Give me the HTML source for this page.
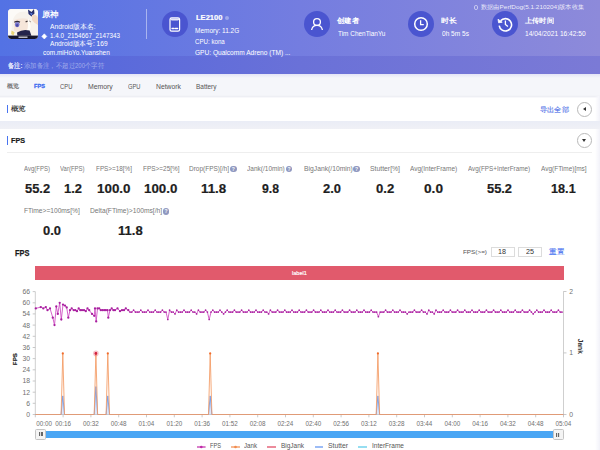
<!DOCTYPE html>
<html><head><meta charset="utf-8">
<style>
*{margin:0;padding:0;box-sizing:border-box}
html,body{width:600px;height:450px;overflow:hidden;background:#fff;font-family:"Liberation Sans",sans-serif}
.a{position:absolute;white-space:nowrap;line-height:1}
.hdr{position:absolute;left:0;top:0;width:600px;height:74px;background:linear-gradient(90deg,#5372e4 0%,#747de0 50%,#8d8ada 100%)}
.note{position:absolute;left:0;top:56px;width:600px;height:18px;background:linear-gradient(90deg,#5066dd 0%,#6a71d8 50%,#7b7ad6 100%)}
.circ{position:absolute;width:26px;height:26px;border-radius:50%;background:#4a55d0}
.q{position:absolute;width:6.5px;height:6.5px;border-radius:50%;background:#8f98c0;color:#fff;font-size:5px;font-weight:bold;line-height:6.5px;text-align:center}
</style></head><body>
<div class="hdr"></div>
<div class="note"></div>
<svg style="position:absolute;left:8px;top:9px" width="30" height="30" viewBox="0 0 30 30">
 <defs><clipPath id="rc"><rect width="30" height="30" rx="3.5"/></clipPath></defs>
 <g clip-path="url(#rc)">
  <rect width="30" height="30" fill="#f7f2ec"/>
  <path d="M6 11Q13 8 20 10L23 14 22 21 14 24 6 22Z" fill="#f6e6da"/>
  <path d="M0 0H30V6Q22 1 12 3 5 6 4 14L3 30H0Z" fill="#fcfaf7"/>
  <ellipse cx="9.2" cy="15.6" rx="2.3" ry="2.6" fill="#7c7ad2"/>
  <ellipse cx="9.2" cy="16.4" rx="1.2" ry="1.3" fill="#4c4aa0"/>
  <path d="M6.3 13.3Q9.2 11.6 12 13.2" stroke="#302a3a" stroke-width="1.1" fill="none"/>
  <path d="M17.6 13Q20 11.4 22.4 13" stroke="#4a3e3e" stroke-width="1.2" fill="none"/>
  <path d="M20 0.5L23.5 3 26 0 26.5 4.5 23.5 7.5 20.5 5Z" fill="#28306e"/>
  <path d="M21.8 3.8L24.6 4.6 23.6 6.6Z" fill="#5c7ae0"/>
  <path d="M24 6Q28.5 5 30 9V16Q26.5 14.5 24 11Z" fill="#f2d9c6"/>
  <path d="M20.5 10Q25.5 17 19.5 27L16.5 26.4Q21.5 18.5 19.5 11Z" fill="#fffdf9"/>
  <path d="M9 23.6Q15 19.6 21.6 21.6L23.4 26.7H9.4Z" fill="#24244a"/>
  <path d="M3.6 21.6L6.6 23.2 5.6 26.6 3.1 25.1Z" fill="#ead676"/>
  <rect y="26.6" width="30" height="3.4" fill="#16162a"/>
  <rect x="10.5" y="27.5" width="9" height="1.4" fill="#c8c8d0"/>
 </g>
</svg>
<svg style="position:absolute;left:41.2px;top:32.5px" width="7" height="7" viewBox="0 0 7 7"><path d="M3.3 0.8L5.8 3.4 3.3 6 0.8 3.4Z" fill="#fff" stroke="#fff" stroke-width="0.6" stroke-linejoin="round"/></svg>
<div style="position:absolute;left:146px;top:9px;width:1px;height:30px;background:rgba(255,255,255,0.45)"></div>

<div class="circ" style="left:162px;top:11px"></div>
<svg style="position:absolute;left:162px;top:11px" width="26" height="26" viewBox="0 0 26 26">
 <rect x="8" y="6.9" width="9.6" height="13.3" rx="1.6" fill="none" stroke="#fff" stroke-width="1.2"/>
 <path d="M8.6 7.6H17V9L15.6 9.6H10L8.6 9Z" fill="#fff" opacity="0.85"/>
 <line x1="10" y1="17.5" x2="12.2" y2="17.5" stroke="#fff" stroke-width="1.4" stroke-linecap="round"/>
 <line x1="13.4" y1="17.5" x2="15.6" y2="17.5" stroke="#fff" stroke-width="1.4" stroke-linecap="round"/>
</svg>
<div style="position:absolute;left:225px;top:15.7px;width:4px;height:3.9px;border-radius:2px;background:rgba(255,255,255,0.35)"></div>

<div class="circ" style="left:304px;top:11px"></div>
<svg style="position:absolute;left:304px;top:11px" width="26" height="26" viewBox="0 0 26 26">
 <circle cx="13" cy="11" r="3.4" fill="none" stroke="#fff" stroke-width="1.3"/>
 <path d="M7.6 19q0.8-4.6 5.4-4.6t5.4 4.6" fill="none" stroke="#fff" stroke-width="1.3"/>
</svg>

<div class="circ" style="left:408px;top:11px"></div>
<svg style="position:absolute;left:408px;top:11px" width="26" height="26" viewBox="0 0 26 26">
 <circle cx="13" cy="13" r="6.3" fill="none" stroke="#fff" stroke-width="1.5"/>
 <path d="M12.6 9.3V13.6H15.8" fill="none" stroke="#fff" stroke-width="1.3"/>
</svg>

<div class="circ" style="left:491.5px;top:11px"></div>
<svg style="position:absolute;left:491.5px;top:11px" width="26" height="26" viewBox="0 0 26 26">
 <path d="M8.6 9.8A6.2 6.2 0 1 1 7.2 14.6" fill="none" stroke="#fff" stroke-width="1.6"/>
 <path d="M6 8.2L6.6 11.8 10.2 11.2Z" fill="#fff" stroke="#fff" stroke-width="0.8" stroke-linejoin="round"/>
 <path d="M13.4 9.6V13.5L15.9 15.6" fill="none" stroke="#fff" stroke-width="1.3"/>
</svg>
<div style="position:absolute;left:474.2px;top:4.8px;width:3.6px;height:5.2px;border:0.6px solid rgba(255,255,255,0.55);border-radius:1.8px"></div>
<div class="a" style="left:42.30px;top:11.07px;font-size:7.6px;color:#fff;font-weight:bold;transform:scaleX(1.060);transform-origin:0 0;">原神</div>
<div class="a" style="left:50.00px;top:24.42px;font-size:6.8px;color:#fff;transform:scaleX(0.984);transform-origin:0 0;">Android版本名:</div>
<div class="a" style="left:50.00px;top:32.62px;font-size:6.8px;color:#fff;transform:scaleX(0.926);transform-origin:0 0;">1.4.0_2154667_2147343</div>
<div class="a" style="left:50.00px;top:41.22px;font-size:6.8px;color:#fff;transform:scaleX(0.967);transform-origin:0 0;">Android版本号: 169</div>
<div class="a" style="left:43.00px;top:50.32px;font-size:6.8px;color:#fff;transform:scaleX(0.948);transform-origin:0 0;">com.miHoYo.Yuanshen</div>
<div class="a" style="left:195.50px;top:13.66px;font-size:7.8px;color:#fff;font-weight:bold;transform:scaleX(0.970);transform-origin:0 0;-webkit-text-stroke:0.2px #fff;">LE2100</div>
<div class="a" style="left:195.20px;top:27.50px;font-size:6.9px;color:#fff;transform:scaleX(0.942);transform-origin:0 0;">Memory: 11.2G</div>
<div class="a" style="left:195.10px;top:38.90px;font-size:6.9px;color:#fff;transform:scaleX(0.893);transform-origin:0 0;">CPU: kona</div>
<div class="a" style="left:195.10px;top:50.10px;font-size:6.9px;color:#fff;transform:scaleX(0.955);transform-origin:0 0;">GPU: Qualcomm Adreno (TM) ...</div>
<div class="a" style="left:337.11px;top:16.78px;font-size:7.4px;color:#fff;font-weight:bold;transform:scaleX(1.048);transform-origin:0 0;">创建者</div>
<div class="a" style="left:337.50px;top:31.40px;font-size:6.9px;color:#fff;transform:scaleX(0.933);transform-origin:0 0;">Tim ChenTianYu</div>
<div class="a" style="left:441.28px;top:16.78px;font-size:7.4px;color:#fff;font-weight:bold;transform:scaleX(1.124);transform-origin:0 0;">时长</div>
<div class="a" style="left:441.70px;top:31.40px;font-size:6.9px;color:#fff;transform:scaleX(0.951);transform-origin:0 0;">0h 5m 5s</div>
<div class="a" style="left:524.92px;top:16.78px;font-size:7.4px;color:#fff;font-weight:bold;transform:scaleX(1.029);transform-origin:0 0;">上传时间</div>
<div class="a" style="left:525.30px;top:31.40px;font-size:6.9px;color:#fff;transform:scaleX(0.959);transform-origin:0 0;">14/04/2021 16:42:50</div>
<div class="a" style="left:480.68px;top:4.31px;font-size:6.2px;color:rgba(255,255,255,0.85);transform:scaleX(1.033);transform-origin:0 0;">数据由PerfDog(5.1.210204)版本收集</div>
<div class="a" style="left:7.70px;top:63.20px;font-size:6.6px;color:rgba(255,255,255,0.92);font-weight:bold;transform:scaleX(0.896);transform-origin:0 0;">备注:</div>
<div class="a" style="left:24.20px;top:63.40px;font-size:6.6px;color:rgba(255,255,255,0.45);transform:scaleX(0.910);transform-origin:0 0;">添加备注，不超过200个字符</div>

<div style="position:absolute;left:0;top:74px;width:600px;height:23.5px;background:linear-gradient(#f5f6fa 0,#f5f6fa 21px,#eeeff4 22.5px,#f8f8fb 23.5px)"></div>
<div style="position:absolute;left:0;top:74px;width:600px;height:4px;background:linear-gradient(#e4e4f6,#f5f6fa)"></div>
<div class="a" style="left:6.68px;top:83.21px;font-size:6.2px;color:#555;transform:scaleX(1.019);transform-origin:0 0;-webkit-text-stroke:0.1px #555;">概览</div>
<div class="a" style="left:34.00px;top:83.21px;font-size:6.2px;color:#3d6cf0;font-weight:bold;transform:scaleX(0.912);transform-origin:0 0;-webkit-text-stroke:0.3px #3d6cf0;">FPS</div>
<div class="a" style="left:60.00px;top:82.59px;font-size:7px;color:#555;transform:scaleX(0.839);transform-origin:0 0;">CPU</div>
<div class="a" style="left:87.60px;top:82.59px;font-size:7px;color:#555;transform:scaleX(0.981);transform-origin:0 0;">Memory</div>
<div class="a" style="left:127.50px;top:82.59px;font-size:7px;color:#555;transform:scaleX(0.824);transform-origin:0 0;">GPU</div>
<div class="a" style="left:155.50px;top:82.59px;font-size:7px;color:#555;transform:scaleX(0.969);transform-origin:0 0;">Network</div>
<div class="a" style="left:196.00px;top:82.59px;font-size:7px;color:#555;transform:scaleX(0.924);transform-origin:0 0;">Battery</div>

<div style="position:absolute;left:0;top:97.5px;width:600px;height:23.5px;background:#fff"></div>
<div style="position:absolute;left:6.7px;top:105px;width:1.6px;height:8px;background:#4874f0"></div>
<div style="position:absolute;left:577px;top:102px;width:15px;height:15px;border-radius:50%;border:0.8px solid #b8b8b8;background:#fff"></div>
<div style="position:absolute;left:582.5px;top:107.3px;width:0;height:0;border-top:2.3px solid transparent;border-bottom:2.3px solid transparent;border-right:3.2px solid #333"></div>
<div style="position:absolute;left:0;top:121px;width:600px;height:8px;background:linear-gradient(#eaedf6,#f0f1f6)"></div>
<div style="position:absolute;left:6.7px;top:136px;width:1.6px;height:9.2px;background:#4874f0"></div>
<div style="position:absolute;left:577.2px;top:133.2px;width:14.8px;height:14.8px;border-radius:50%;border:0.8px solid #b8b8b8;background:#fff"></div>
<div style="position:absolute;left:582.2px;top:139.3px;width:0;height:0;border-left:2.4px solid transparent;border-right:2.4px solid transparent;border-top:3.2px solid #333"></div>
<div style="position:absolute;left:7px;top:152px;width:585px;height:1px;background:#eeeeee"></div>
<div class="a" style="left:10.61px;top:105.38px;font-size:7.4px;color:#2a2a2a;transform:scaleX(1.067);transform-origin:0 0;-webkit-text-stroke:0.12px #2a2a2a;">概览</div>
<div class="a" style="left:540.34px;top:105.79px;font-size:7.0px;color:#4a6ee8;transform:scaleX(1.026);transform-origin:0 0;-webkit-text-stroke:0.1px #4a6ee8;">导出全部</div>
<div class="a" style="left:11.00px;top:136.53px;font-size:8.0px;color:#1a1a1a;font-weight:bold;transform:scaleX(0.900);transform-origin:0 0;-webkit-text-stroke:0.2px #1a1a1a;">FPS</div>

<div class="a" style="left:24.00px;top:164.89px;font-size:7.0px;color:#777;transform:scaleX(0.857);transform-origin:0 0;">Avg(FPS)</div>
<div class="a" style="left:24.70px;top:182.14px;font-size:13.6px;color:#1e1e1e;font-weight:bold;transform:scaleX(0.946);transform-origin:0 0;-webkit-text-stroke:0.2px #1e1e1e;">55.2</div>
<div class="a" style="left:60.00px;top:164.89px;font-size:7.0px;color:#777;transform:scaleX(0.857);transform-origin:0 0;">Var(FPS)</div>
<div class="a" style="left:64.00px;top:182.14px;font-size:13.6px;color:#1e1e1e;font-weight:bold;transform:scaleX(0.952);transform-origin:0 0;-webkit-text-stroke:0.2px #1e1e1e;">1.2</div>
<div class="a" style="left:96.00px;top:164.89px;font-size:7.0px;color:#777;transform:scaleX(0.907);transform-origin:0 0;">FPS&gt;=18[%]</div>
<div class="a" style="left:97.00px;top:182.14px;font-size:13.6px;color:#1e1e1e;font-weight:bold;transform:scaleX(0.984);transform-origin:0 0;-webkit-text-stroke:0.2px #1e1e1e;">100.0</div>
<div class="a" style="left:142.70px;top:164.89px;font-size:7.0px;color:#777;transform:scaleX(0.922);transform-origin:0 0;">FPS&gt;=25[%]</div>
<div class="a" style="left:144.00px;top:182.14px;font-size:13.6px;color:#1e1e1e;font-weight:bold;transform:scaleX(0.979);transform-origin:0 0;-webkit-text-stroke:0.2px #1e1e1e;">100.0</div>
<div class="a" style="left:189.30px;top:164.89px;font-size:7.0px;color:#777;transform:scaleX(0.926);transform-origin:0 0;">Drop(FPS)[/h]</div>
<div class="q" style="left:230.1px;top:165.8px">?</div>
<div class="a" style="left:200.70px;top:182.14px;font-size:13.6px;color:#1e1e1e;font-weight:bold;transform:scaleX(0.982);transform-origin:0 0;-webkit-text-stroke:0.2px #1e1e1e;">11.8</div>
<div class="a" style="left:247.30px;top:164.89px;font-size:7.0px;color:#777;transform:scaleX(0.932);transform-origin:0 0;">Jank(/10min)</div>
<div class="q" style="left:285.8px;top:165.8px">?</div>
<div class="a" style="left:262.30px;top:182.14px;font-size:13.6px;color:#1e1e1e;font-weight:bold;transform:scaleX(0.899);transform-origin:0 0;-webkit-text-stroke:0.2px #1e1e1e;">9.8</div>
<div class="a" style="left:303.75px;top:164.89px;font-size:7.0px;color:#777;transform:scaleX(0.964);transform-origin:0 0;">BigJank(/10min)</div>
<div class="q" style="left:353.3px;top:165.8px">?</div>
<div class="a" style="left:323.00px;top:182.14px;font-size:13.6px;color:#1e1e1e;font-weight:bold;transform:scaleX(0.952);transform-origin:0 0;-webkit-text-stroke:0.2px #1e1e1e;">2.0</div>
<div class="a" style="left:370.00px;top:164.89px;font-size:7.0px;color:#777;transform:scaleX(0.976);transform-origin:0 0;">Stutter[%]</div>
<div class="a" style="left:375.50px;top:182.14px;font-size:13.6px;color:#1e1e1e;font-weight:bold;transform:scaleX(0.965);transform-origin:0 0;-webkit-text-stroke:0.2px #1e1e1e;">0.2</div>
<div class="a" style="left:410.00px;top:164.89px;font-size:7.0px;color:#777;transform:scaleX(0.928);transform-origin:0 0;">Avg(InterFrame)</div>
<div class="a" style="left:424.30px;top:182.14px;font-size:13.6px;color:#1e1e1e;font-weight:bold;transform:scaleX(1.005);transform-origin:0 0;-webkit-text-stroke:0.2px #1e1e1e;">0.0</div>
<div class="a" style="left:467.70px;top:164.89px;font-size:7.0px;color:#777;transform:scaleX(0.907);transform-origin:0 0;">Avg(FPS+InterFrame)</div>
<div class="a" style="left:487.30px;top:182.14px;font-size:13.6px;color:#1e1e1e;font-weight:bold;transform:scaleX(0.945);transform-origin:0 0;-webkit-text-stroke:0.2px #1e1e1e;">55.2</div>
<div class="a" style="left:540.70px;top:164.89px;font-size:7.0px;color:#777;transform:scaleX(0.924);transform-origin:0 0;">Avg(FTime)[ms]</div>
<div class="a" style="left:551.00px;top:182.14px;font-size:13.6px;color:#1e1e1e;font-weight:bold;transform:scaleX(0.933);transform-origin:0 0;-webkit-text-stroke:0.2px #1e1e1e;">18.1</div>
<div class="a" style="left:24.00px;top:207.49px;font-size:7.0px;color:#777;transform:scaleX(0.947);transform-origin:0 0;">FTime&gt;=100ms[%]</div>
<div class="a" style="left:43.00px;top:224.14px;font-size:13.6px;color:#1e1e1e;font-weight:bold;transform:scaleX(0.952);transform-origin:0 0;-webkit-text-stroke:0.2px #1e1e1e;">0.0</div>
<div class="a" style="left:89.60px;top:207.49px;font-size:7.0px;color:#777;transform:scaleX(0.957);transform-origin:0 0;">Delta(FTime)&gt;100ms[/h]</div>
<div class="q" style="left:162.8px;top:208.4px">?</div>
<div class="a" style="left:117.60px;top:224.14px;font-size:13.6px;color:#1e1e1e;font-weight:bold;transform:scaleX(0.960);transform-origin:0 0;-webkit-text-stroke:0.2px #1e1e1e;">11.8</div>

<div style="position:absolute;left:490.5px;top:247px;width:24px;height:10px;border:1px solid #dcdcdc"></div>
<div style="position:absolute;left:518px;top:247px;width:24px;height:10px;border:1px solid #dcdcdc"></div>

<div style="position:absolute;left:35.3px;top:266px;width:528.4px;height:14px;background:#e15a6c"></div>
<svg width="600" height="450" style="position:absolute;left:0;top:0" font-family="Liberation Sans">
<line x1="35.3" y1="291.6" x2="35.3" y2="414.5" stroke="#cfcfcf" stroke-width="1"/>
<line x1="563.5" y1="291.4" x2="563.5" y2="414.5" stroke="#cfcfcf" stroke-width="1"/>
<line x1="32.699999999999996" y1="414.5" x2="35.3" y2="414.5" stroke="#bbb" stroke-width="0.8"/>
<text x="30" y="416.9" text-anchor="end" font-size="6.8" fill="#707070">0</text>
<line x1="32.699999999999996" y1="403.3" x2="35.3" y2="403.3" stroke="#bbb" stroke-width="0.8"/>
<text x="30" y="405.7" text-anchor="end" font-size="6.8" fill="#707070">6</text>
<line x1="32.699999999999996" y1="392.2" x2="35.3" y2="392.2" stroke="#bbb" stroke-width="0.8"/>
<text x="30" y="394.6" text-anchor="end" font-size="6.8" fill="#707070">12</text>
<line x1="32.699999999999996" y1="381.0" x2="35.3" y2="381.0" stroke="#bbb" stroke-width="0.8"/>
<text x="30" y="383.4" text-anchor="end" font-size="6.8" fill="#707070">18</text>
<line x1="32.699999999999996" y1="369.8" x2="35.3" y2="369.8" stroke="#bbb" stroke-width="0.8"/>
<text x="30" y="372.2" text-anchor="end" font-size="6.8" fill="#707070">24</text>
<line x1="32.699999999999996" y1="358.6" x2="35.3" y2="358.6" stroke="#bbb" stroke-width="0.8"/>
<text x="30" y="361.0" text-anchor="end" font-size="6.8" fill="#707070">30</text>
<line x1="32.699999999999996" y1="347.5" x2="35.3" y2="347.5" stroke="#bbb" stroke-width="0.8"/>
<text x="30" y="349.9" text-anchor="end" font-size="6.8" fill="#707070">36</text>
<line x1="32.699999999999996" y1="336.3" x2="35.3" y2="336.3" stroke="#bbb" stroke-width="0.8"/>
<text x="30" y="338.7" text-anchor="end" font-size="6.8" fill="#707070">42</text>
<line x1="32.699999999999996" y1="325.1" x2="35.3" y2="325.1" stroke="#bbb" stroke-width="0.8"/>
<text x="30" y="327.5" text-anchor="end" font-size="6.8" fill="#707070">48</text>
<line x1="32.699999999999996" y1="313.9" x2="35.3" y2="313.9" stroke="#bbb" stroke-width="0.8"/>
<text x="30" y="316.3" text-anchor="end" font-size="6.8" fill="#707070">54</text>
<line x1="32.699999999999996" y1="302.8" x2="35.3" y2="302.8" stroke="#bbb" stroke-width="0.8"/>
<text x="30" y="305.2" text-anchor="end" font-size="6.8" fill="#707070">60</text>
<line x1="32.699999999999996" y1="291.6" x2="35.3" y2="291.6" stroke="#bbb" stroke-width="0.8"/>
<text x="30" y="294.0" text-anchor="end" font-size="6.8" fill="#707070">66</text>
<line x1="563.5" y1="291.5" x2="566.5" y2="291.5" stroke="#bbb" stroke-width="0.8"/>
<text x="569.3" y="293.9" font-size="6.8" fill="#707070">2</text>
<line x1="563.5" y1="352.9" x2="566.5" y2="352.9" stroke="#bbb" stroke-width="0.8"/>
<text x="569.3" y="355.3" font-size="6.8" fill="#707070">1</text>
<line x1="563.5" y1="414.5" x2="566.5" y2="414.5" stroke="#bbb" stroke-width="0.8"/>
<text x="569.3" y="416.9" font-size="6.8" fill="#707070">0</text>
<line x1="35.3" y1="414.5" x2="563.5" y2="414.5" stroke="#cfcfcf" stroke-width="1"/>
<line x1="35.3" y1="414.5" x2="35.3" y2="417.3" stroke="#bbb" stroke-width="0.8"/>
<text x="36.2" y="425.8" font-size="6.3" fill="#707070">00:00</text>
<line x1="63.1" y1="414.5" x2="63.1" y2="417.3" stroke="#bbb" stroke-width="0.8"/>
<text x="63.1" y="425.8" text-anchor="middle" font-size="6.3" fill="#707070">00:16</text>
<line x1="90.9" y1="414.5" x2="90.9" y2="417.3" stroke="#bbb" stroke-width="0.8"/>
<text x="90.9" y="425.8" text-anchor="middle" font-size="6.3" fill="#707070">00:32</text>
<line x1="118.7" y1="414.5" x2="118.7" y2="417.3" stroke="#bbb" stroke-width="0.8"/>
<text x="118.7" y="425.8" text-anchor="middle" font-size="6.3" fill="#707070">00:48</text>
<line x1="146.5" y1="414.5" x2="146.5" y2="417.3" stroke="#bbb" stroke-width="0.8"/>
<text x="146.5" y="425.8" text-anchor="middle" font-size="6.3" fill="#707070">01:04</text>
<line x1="174.3" y1="414.5" x2="174.3" y2="417.3" stroke="#bbb" stroke-width="0.8"/>
<text x="174.3" y="425.8" text-anchor="middle" font-size="6.3" fill="#707070">01:20</text>
<line x1="202.1" y1="414.5" x2="202.1" y2="417.3" stroke="#bbb" stroke-width="0.8"/>
<text x="202.1" y="425.8" text-anchor="middle" font-size="6.3" fill="#707070">01:36</text>
<line x1="229.9" y1="414.5" x2="229.9" y2="417.3" stroke="#bbb" stroke-width="0.8"/>
<text x="229.9" y="425.8" text-anchor="middle" font-size="6.3" fill="#707070">01:52</text>
<line x1="257.7" y1="414.5" x2="257.7" y2="417.3" stroke="#bbb" stroke-width="0.8"/>
<text x="257.7" y="425.8" text-anchor="middle" font-size="6.3" fill="#707070">02:08</text>
<line x1="285.5" y1="414.5" x2="285.5" y2="417.3" stroke="#bbb" stroke-width="0.8"/>
<text x="285.5" y="425.8" text-anchor="middle" font-size="6.3" fill="#707070">02:24</text>
<line x1="313.3" y1="414.5" x2="313.3" y2="417.3" stroke="#bbb" stroke-width="0.8"/>
<text x="313.3" y="425.8" text-anchor="middle" font-size="6.3" fill="#707070">02:40</text>
<line x1="341.1" y1="414.5" x2="341.1" y2="417.3" stroke="#bbb" stroke-width="0.8"/>
<text x="341.1" y="425.8" text-anchor="middle" font-size="6.3" fill="#707070">02:56</text>
<line x1="368.9" y1="414.5" x2="368.9" y2="417.3" stroke="#bbb" stroke-width="0.8"/>
<text x="368.9" y="425.8" text-anchor="middle" font-size="6.3" fill="#707070">03:12</text>
<line x1="396.7" y1="414.5" x2="396.7" y2="417.3" stroke="#bbb" stroke-width="0.8"/>
<text x="396.7" y="425.8" text-anchor="middle" font-size="6.3" fill="#707070">03:28</text>
<line x1="424.5" y1="414.5" x2="424.5" y2="417.3" stroke="#bbb" stroke-width="0.8"/>
<text x="424.5" y="425.8" text-anchor="middle" font-size="6.3" fill="#707070">03:44</text>
<line x1="452.3" y1="414.5" x2="452.3" y2="417.3" stroke="#bbb" stroke-width="0.8"/>
<text x="452.3" y="425.8" text-anchor="middle" font-size="6.3" fill="#707070">04:00</text>
<line x1="480.1" y1="414.5" x2="480.1" y2="417.3" stroke="#bbb" stroke-width="0.8"/>
<text x="480.1" y="425.8" text-anchor="middle" font-size="6.3" fill="#707070">04:16</text>
<line x1="507.9" y1="414.5" x2="507.9" y2="417.3" stroke="#bbb" stroke-width="0.8"/>
<text x="507.9" y="425.8" text-anchor="middle" font-size="6.3" fill="#707070">04:32</text>
<line x1="535.7" y1="414.5" x2="535.7" y2="417.3" stroke="#bbb" stroke-width="0.8"/>
<text x="535.7" y="425.8" text-anchor="middle" font-size="6.3" fill="#707070">04:48</text>
<line x1="563.5" y1="414.5" x2="563.5" y2="417.3" stroke="#bbb" stroke-width="0.8"/>
<text x="563.5" y="425.8" text-anchor="middle" font-size="6.3" fill="#707070">05:04</text>
<polyline points="35.3,414.5 61.1,414.5 62.8,395.9 64.5,414.5 94.2,414.5 95.9,386.6 97.6,414.5 106.1,414.5 107.8,395.9 109.5,414.5 208.5,414.5 210.2,395.9 211.9,414.5 376.2,414.5 377.9,395.9 379.6,414.5 563.5,414.5" fill="rgba(120,160,240,0.25)" stroke="#6f9bea" stroke-width="0.9"/>
<polyline points="35.3,414.5 61.1,414.5 62.8,353.4 64.5,414.5 94.2,414.5 95.9,353.4 97.6,414.5 106.1,414.5 107.8,353.4 109.5,414.5 208.5,414.5 210.2,353.4 211.9,414.5 376.2,414.5 377.9,353.4 379.6,414.5 563.5,414.5" fill="none" stroke="#f39a62" stroke-width="0.85"/>
<circle cx="62.8" cy="353.4" r="1.1" fill="#f06a2a"/>
<circle cx="95.9" cy="353.4" r="1.1" fill="#f06a2a"/>
<circle cx="107.8" cy="353.4" r="1.1" fill="#f06a2a"/>
<circle cx="210.2" cy="353.4" r="1.1" fill="#f06a2a"/>
<circle cx="377.9" cy="353.4" r="1.1" fill="#f06a2a"/>
<circle cx="95.9" cy="353.4" r="2.8" fill="rgba(230,80,100,0.35)"/><circle cx="95.9" cy="353.4" r="1.3" fill="#d02040"/>
<polyline points="35.8,308.4 40.8,307.1 43.3,308.4 45.8,307.1 47.5,310.2 50.0,308.4 52.8,317.7 54.5,325.1 56.3,306.5 57.8,313.9 59.7,302.8 61.3,319.5 63.0,304.6 65.0,305.6 66.7,307.4 68.3,317.7 70.0,310.2 71.7,308.4 73.7,310.2 75.3,310.2 77.0,311.2 78.7,308.4 80.3,310.2 82.0,310.2 84.0,310.2 85.8,311.2 87.5,308.4 89.2,310.2 92.0,313.9 94.2,315.8 95.0,308.4 96.2,321.4 97.5,308.4 99.2,308.4 100.8,310.2 102.5,310.2 104.2,310.2 105.8,310.2 107.5,310.2 108.3,317.7 110.0,310.2 111.7,308.4 113.4,310.2 115.0,310.2 117.5,308.4 120.0,311.2 122.0,310.2 124.0,310.2 125.8,308.4 128.3,310.2 130.0,312.1 131.8,312.1 133.6,310.2 135.4,312.1 137.2,312.1 139.0,312.1 140.8,310.2 142.6,312.1 144.4,312.1 146.2,312.1 148.0,310.2 149.8,312.1 151.6,312.1 153.4,312.1 155.2,310.2 157.0,312.1 158.8,312.1 160.6,312.1 162.4,310.2 164.2,312.1 166.0,312.1 167.8,319.5 169.6,310.2 171.4,312.1 173.2,312.1 175.0,313.9 176.8,310.2 178.6,312.1 180.4,312.1 182.2,312.1 184.0,310.2 185.8,312.1 187.6,312.1 189.4,312.1 191.2,310.2 193.0,312.1 194.8,312.1 196.6,313.9 198.4,310.2 200.2,312.1 202.0,312.1 203.8,312.1 205.6,310.2 207.4,312.1 209.2,319.5 211.0,312.1 212.8,310.2 214.6,312.1 216.4,312.1 218.2,312.1 220.0,310.2 221.8,312.1 223.6,313.9 225.4,312.1 227.2,310.2 229.0,312.1 230.8,312.1 232.6,312.1 234.4,310.2 236.2,312.1 238.0,312.1 239.8,312.1 241.6,310.2 243.4,312.1 245.2,312.1 247.0,312.1 248.8,310.2 250.6,312.1 252.4,312.1 254.2,312.1 256.0,310.2 257.8,312.1 259.6,312.1 261.4,312.1 263.2,310.2 265.0,312.1 266.8,312.1 268.6,313.9 270.4,310.2 272.2,312.1 274.0,312.1 275.8,312.1 277.6,310.2 279.4,312.1 281.2,312.1 283.0,312.1 284.8,310.2 286.6,312.1 288.4,312.1 290.2,312.1 292.0,310.2 293.8,312.1 295.6,312.1 297.4,312.1 299.2,310.2 301.0,312.1 302.8,312.1 304.6,312.1 306.4,310.2 308.2,312.1 310.0,312.1 311.8,312.1 313.6,310.2 315.4,312.1 317.2,312.1 319.0,312.1 320.8,310.2 322.6,312.1 324.4,312.1 326.2,312.1 328.0,310.2 329.8,312.1 331.6,312.1 333.4,312.1 335.2,310.2 337.0,312.1 338.8,312.1 340.6,312.1 342.4,310.2 344.2,312.1 346.0,312.1 347.8,312.1 349.6,310.2 351.4,312.1 353.2,312.1 355.0,312.1 356.8,310.2 358.6,312.1 360.4,312.1 362.2,312.1 364.0,310.2 365.8,312.1 367.6,312.1 369.4,312.1 371.2,310.2 373.0,312.1 374.8,312.1 376.6,312.1 378.4,316.7 380.2,312.1 382.0,312.1 383.8,312.1 385.6,310.2 387.4,312.1 389.2,312.1 391.0,312.1 392.8,310.2 394.6,312.1 396.4,312.1 398.2,312.1 400.0,310.2 401.8,312.1 403.6,312.1 405.4,312.1 407.2,313.9 409.0,312.1 410.8,312.1 412.6,312.1 414.4,310.2 416.2,312.1 418.0,312.1 419.8,312.1 421.6,310.2 423.4,312.1 425.2,312.1 427.0,313.9 428.8,310.2 430.6,312.1 432.4,312.1 434.2,313.9 436.0,310.2 437.8,312.1 439.6,312.1 441.4,312.1 443.2,310.2 445.0,312.1 446.8,312.1 448.6,312.1 450.4,310.2 452.2,312.1 454.0,312.1 455.8,312.1 457.6,310.2 459.4,312.1 461.2,312.1 463.0,312.1 464.8,310.2 466.6,312.1 468.4,312.1 470.2,312.1 472.0,310.2 473.8,312.1 475.6,312.1 477.4,312.1 479.2,310.2 481.0,312.1 482.8,312.1 484.6,312.1 486.4,310.2 488.2,312.1 490.0,312.1 491.8,312.1 493.6,310.2 495.4,312.1 497.2,312.1 499.0,312.1 500.8,310.2 502.6,312.1 504.4,312.1 506.2,312.1 508.0,310.2 509.8,312.1 511.6,312.1 513.4,312.1 515.2,310.2 517.0,312.1 518.8,312.1 520.6,312.1 522.4,310.2 524.2,312.1 526.0,312.1 527.8,312.1 529.6,310.2 531.4,312.1 533.2,313.9 535.0,312.1 536.8,310.2 538.6,312.1 540.4,312.1 542.2,312.1 544.0,310.2 545.8,312.1 547.6,312.1 549.4,312.1 551.2,310.2 553.0,312.1 554.8,312.1 556.6,312.1 558.4,310.2 560.2,312.1 562.0,312.1" fill="none" stroke="#cc48c0" stroke-width="0.85" stroke-linejoin="round"/>
<g fill="#a8209f"><circle cx="35.8" cy="308.4" r="1.15"/><circle cx="40.8" cy="307.1" r="1.15"/><circle cx="43.3" cy="308.4" r="1.15"/><circle cx="45.8" cy="307.1" r="1.15"/><circle cx="47.5" cy="310.2" r="1.15"/><circle cx="50.0" cy="308.4" r="1.15"/><circle cx="52.8" cy="317.7" r="1.15"/><circle cx="54.5" cy="325.1" r="1.15"/><circle cx="56.3" cy="306.5" r="1.15"/><circle cx="57.8" cy="313.9" r="1.15"/><circle cx="59.7" cy="302.8" r="1.15"/><circle cx="61.3" cy="319.5" r="1.15"/><circle cx="63.0" cy="304.6" r="1.15"/><circle cx="65.0" cy="305.6" r="1.15"/><circle cx="66.7" cy="307.4" r="1.15"/><circle cx="68.3" cy="317.7" r="1.15"/><circle cx="70.0" cy="310.2" r="1.15"/><circle cx="71.7" cy="308.4" r="1.15"/><circle cx="73.7" cy="310.2" r="1.15"/><circle cx="75.3" cy="310.2" r="1.15"/><circle cx="77.0" cy="311.2" r="1.15"/><circle cx="78.7" cy="308.4" r="1.15"/><circle cx="80.3" cy="310.2" r="1.15"/><circle cx="82.0" cy="310.2" r="1.15"/><circle cx="84.0" cy="310.2" r="1.15"/><circle cx="85.8" cy="311.2" r="1.15"/><circle cx="87.5" cy="308.4" r="1.15"/><circle cx="89.2" cy="310.2" r="1.15"/><circle cx="92.0" cy="313.9" r="1.15"/><circle cx="94.2" cy="315.8" r="1.15"/><circle cx="95.0" cy="308.4" r="1.15"/><circle cx="96.2" cy="321.4" r="1.15"/><circle cx="97.5" cy="308.4" r="1.15"/><circle cx="99.2" cy="308.4" r="1.15"/><circle cx="100.8" cy="310.2" r="1.15"/><circle cx="102.5" cy="310.2" r="1.15"/><circle cx="104.2" cy="310.2" r="1.15"/><circle cx="105.8" cy="310.2" r="1.15"/><circle cx="107.5" cy="310.2" r="1.15"/><circle cx="108.3" cy="317.7" r="1.15"/><circle cx="110.0" cy="310.2" r="1.15"/><circle cx="111.7" cy="308.4" r="1.15"/><circle cx="113.4" cy="310.2" r="1.15"/><circle cx="115.0" cy="310.2" r="1.15"/><circle cx="117.5" cy="308.4" r="1.15"/><circle cx="120.0" cy="311.2" r="1.15"/><circle cx="122.0" cy="310.2" r="1.15"/><circle cx="124.0" cy="310.2" r="1.15"/><circle cx="125.8" cy="308.4" r="1.15"/><circle cx="128.3" cy="310.2" r="1.15"/><circle cx="130.0" cy="312.1" r="0.85"/><circle cx="131.8" cy="312.1" r="0.85"/><circle cx="133.6" cy="310.2" r="0.85"/><circle cx="135.4" cy="312.1" r="0.85"/><circle cx="137.2" cy="312.1" r="0.85"/><circle cx="139.0" cy="312.1" r="0.85"/><circle cx="140.8" cy="310.2" r="0.85"/><circle cx="142.6" cy="312.1" r="0.85"/><circle cx="144.4" cy="312.1" r="0.85"/><circle cx="146.2" cy="312.1" r="0.85"/><circle cx="148.0" cy="310.2" r="0.85"/><circle cx="149.8" cy="312.1" r="0.85"/><circle cx="151.6" cy="312.1" r="0.85"/><circle cx="153.4" cy="312.1" r="0.85"/><circle cx="155.2" cy="310.2" r="0.85"/><circle cx="157.0" cy="312.1" r="0.85"/><circle cx="158.8" cy="312.1" r="0.85"/><circle cx="160.6" cy="312.1" r="0.85"/><circle cx="162.4" cy="310.2" r="0.85"/><circle cx="164.2" cy="312.1" r="0.85"/><circle cx="166.0" cy="312.1" r="0.85"/><circle cx="167.8" cy="319.5" r="0.85"/><circle cx="169.6" cy="310.2" r="0.85"/><circle cx="171.4" cy="312.1" r="0.85"/><circle cx="173.2" cy="312.1" r="0.85"/><circle cx="175.0" cy="313.9" r="0.85"/><circle cx="176.8" cy="310.2" r="0.85"/><circle cx="178.6" cy="312.1" r="0.85"/><circle cx="180.4" cy="312.1" r="0.85"/><circle cx="182.2" cy="312.1" r="0.85"/><circle cx="184.0" cy="310.2" r="0.85"/><circle cx="185.8" cy="312.1" r="0.85"/><circle cx="187.6" cy="312.1" r="0.85"/><circle cx="189.4" cy="312.1" r="0.85"/><circle cx="191.2" cy="310.2" r="0.85"/><circle cx="193.0" cy="312.1" r="0.85"/><circle cx="194.8" cy="312.1" r="0.85"/><circle cx="196.6" cy="313.9" r="0.85"/><circle cx="198.4" cy="310.2" r="0.85"/><circle cx="200.2" cy="312.1" r="0.85"/><circle cx="202.0" cy="312.1" r="0.85"/><circle cx="203.8" cy="312.1" r="0.85"/><circle cx="205.6" cy="310.2" r="0.85"/><circle cx="207.4" cy="312.1" r="0.85"/><circle cx="209.2" cy="319.5" r="0.85"/><circle cx="211.0" cy="312.1" r="0.85"/><circle cx="212.8" cy="310.2" r="0.85"/><circle cx="214.6" cy="312.1" r="0.85"/><circle cx="216.4" cy="312.1" r="0.85"/><circle cx="218.2" cy="312.1" r="0.85"/><circle cx="220.0" cy="310.2" r="0.85"/><circle cx="221.8" cy="312.1" r="0.85"/><circle cx="223.6" cy="313.9" r="0.85"/><circle cx="225.4" cy="312.1" r="0.85"/><circle cx="227.2" cy="310.2" r="0.85"/><circle cx="229.0" cy="312.1" r="0.85"/><circle cx="230.8" cy="312.1" r="0.85"/><circle cx="232.6" cy="312.1" r="0.85"/><circle cx="234.4" cy="310.2" r="0.85"/><circle cx="236.2" cy="312.1" r="0.85"/><circle cx="238.0" cy="312.1" r="0.85"/><circle cx="239.8" cy="312.1" r="0.85"/><circle cx="241.6" cy="310.2" r="0.85"/><circle cx="243.4" cy="312.1" r="0.85"/><circle cx="245.2" cy="312.1" r="0.85"/><circle cx="247.0" cy="312.1" r="0.85"/><circle cx="248.8" cy="310.2" r="0.85"/><circle cx="250.6" cy="312.1" r="0.85"/><circle cx="252.4" cy="312.1" r="0.85"/><circle cx="254.2" cy="312.1" r="0.85"/><circle cx="256.0" cy="310.2" r="0.85"/><circle cx="257.8" cy="312.1" r="0.85"/><circle cx="259.6" cy="312.1" r="0.85"/><circle cx="261.4" cy="312.1" r="0.85"/><circle cx="263.2" cy="310.2" r="0.85"/><circle cx="265.0" cy="312.1" r="0.85"/><circle cx="266.8" cy="312.1" r="0.85"/><circle cx="268.6" cy="313.9" r="0.85"/><circle cx="270.4" cy="310.2" r="0.85"/><circle cx="272.2" cy="312.1" r="0.85"/><circle cx="274.0" cy="312.1" r="0.85"/><circle cx="275.8" cy="312.1" r="0.85"/><circle cx="277.6" cy="310.2" r="0.85"/><circle cx="279.4" cy="312.1" r="0.85"/><circle cx="281.2" cy="312.1" r="0.85"/><circle cx="283.0" cy="312.1" r="0.85"/><circle cx="284.8" cy="310.2" r="0.85"/><circle cx="286.6" cy="312.1" r="0.85"/><circle cx="288.4" cy="312.1" r="0.85"/><circle cx="290.2" cy="312.1" r="0.85"/><circle cx="292.0" cy="310.2" r="0.85"/><circle cx="293.8" cy="312.1" r="0.85"/><circle cx="295.6" cy="312.1" r="0.85"/><circle cx="297.4" cy="312.1" r="0.85"/><circle cx="299.2" cy="310.2" r="0.85"/><circle cx="301.0" cy="312.1" r="0.85"/><circle cx="302.8" cy="312.1" r="0.85"/><circle cx="304.6" cy="312.1" r="0.85"/><circle cx="306.4" cy="310.2" r="0.85"/><circle cx="308.2" cy="312.1" r="0.85"/><circle cx="310.0" cy="312.1" r="0.85"/><circle cx="311.8" cy="312.1" r="0.85"/><circle cx="313.6" cy="310.2" r="0.85"/><circle cx="315.4" cy="312.1" r="0.85"/><circle cx="317.2" cy="312.1" r="0.85"/><circle cx="319.0" cy="312.1" r="0.85"/><circle cx="320.8" cy="310.2" r="0.85"/><circle cx="322.6" cy="312.1" r="0.85"/><circle cx="324.4" cy="312.1" r="0.85"/><circle cx="326.2" cy="312.1" r="0.85"/><circle cx="328.0" cy="310.2" r="0.85"/><circle cx="329.8" cy="312.1" r="0.85"/><circle cx="331.6" cy="312.1" r="0.85"/><circle cx="333.4" cy="312.1" r="0.85"/><circle cx="335.2" cy="310.2" r="0.85"/><circle cx="337.0" cy="312.1" r="0.85"/><circle cx="338.8" cy="312.1" r="0.85"/><circle cx="340.6" cy="312.1" r="0.85"/><circle cx="342.4" cy="310.2" r="0.85"/><circle cx="344.2" cy="312.1" r="0.85"/><circle cx="346.0" cy="312.1" r="0.85"/><circle cx="347.8" cy="312.1" r="0.85"/><circle cx="349.6" cy="310.2" r="0.85"/><circle cx="351.4" cy="312.1" r="0.85"/><circle cx="353.2" cy="312.1" r="0.85"/><circle cx="355.0" cy="312.1" r="0.85"/><circle cx="356.8" cy="310.2" r="0.85"/><circle cx="358.6" cy="312.1" r="0.85"/><circle cx="360.4" cy="312.1" r="0.85"/><circle cx="362.2" cy="312.1" r="0.85"/><circle cx="364.0" cy="310.2" r="0.85"/><circle cx="365.8" cy="312.1" r="0.85"/><circle cx="367.6" cy="312.1" r="0.85"/><circle cx="369.4" cy="312.1" r="0.85"/><circle cx="371.2" cy="310.2" r="0.85"/><circle cx="373.0" cy="312.1" r="0.85"/><circle cx="374.8" cy="312.1" r="0.85"/><circle cx="376.6" cy="312.1" r="0.85"/><circle cx="378.4" cy="316.7" r="0.85"/><circle cx="380.2" cy="312.1" r="0.85"/><circle cx="382.0" cy="312.1" r="0.85"/><circle cx="383.8" cy="312.1" r="0.85"/><circle cx="385.6" cy="310.2" r="0.85"/><circle cx="387.4" cy="312.1" r="0.85"/><circle cx="389.2" cy="312.1" r="0.85"/><circle cx="391.0" cy="312.1" r="0.85"/><circle cx="392.8" cy="310.2" r="0.85"/><circle cx="394.6" cy="312.1" r="0.85"/><circle cx="396.4" cy="312.1" r="0.85"/><circle cx="398.2" cy="312.1" r="0.85"/><circle cx="400.0" cy="310.2" r="0.85"/><circle cx="401.8" cy="312.1" r="0.85"/><circle cx="403.6" cy="312.1" r="0.85"/><circle cx="405.4" cy="312.1" r="0.85"/><circle cx="407.2" cy="313.9" r="0.85"/><circle cx="409.0" cy="312.1" r="0.85"/><circle cx="410.8" cy="312.1" r="0.85"/><circle cx="412.6" cy="312.1" r="0.85"/><circle cx="414.4" cy="310.2" r="0.85"/><circle cx="416.2" cy="312.1" r="0.85"/><circle cx="418.0" cy="312.1" r="0.85"/><circle cx="419.8" cy="312.1" r="0.85"/><circle cx="421.6" cy="310.2" r="0.85"/><circle cx="423.4" cy="312.1" r="0.85"/><circle cx="425.2" cy="312.1" r="0.85"/><circle cx="427.0" cy="313.9" r="0.85"/><circle cx="428.8" cy="310.2" r="0.85"/><circle cx="430.6" cy="312.1" r="0.85"/><circle cx="432.4" cy="312.1" r="0.85"/><circle cx="434.2" cy="313.9" r="0.85"/><circle cx="436.0" cy="310.2" r="0.85"/><circle cx="437.8" cy="312.1" r="0.85"/><circle cx="439.6" cy="312.1" r="0.85"/><circle cx="441.4" cy="312.1" r="0.85"/><circle cx="443.2" cy="310.2" r="0.85"/><circle cx="445.0" cy="312.1" r="0.85"/><circle cx="446.8" cy="312.1" r="0.85"/><circle cx="448.6" cy="312.1" r="0.85"/><circle cx="450.4" cy="310.2" r="0.85"/><circle cx="452.2" cy="312.1" r="0.85"/><circle cx="454.0" cy="312.1" r="0.85"/><circle cx="455.8" cy="312.1" r="0.85"/><circle cx="457.6" cy="310.2" r="0.85"/><circle cx="459.4" cy="312.1" r="0.85"/><circle cx="461.2" cy="312.1" r="0.85"/><circle cx="463.0" cy="312.1" r="0.85"/><circle cx="464.8" cy="310.2" r="0.85"/><circle cx="466.6" cy="312.1" r="0.85"/><circle cx="468.4" cy="312.1" r="0.85"/><circle cx="470.2" cy="312.1" r="0.85"/><circle cx="472.0" cy="310.2" r="0.85"/><circle cx="473.8" cy="312.1" r="0.85"/><circle cx="475.6" cy="312.1" r="0.85"/><circle cx="477.4" cy="312.1" r="0.85"/><circle cx="479.2" cy="310.2" r="0.85"/><circle cx="481.0" cy="312.1" r="0.85"/><circle cx="482.8" cy="312.1" r="0.85"/><circle cx="484.6" cy="312.1" r="0.85"/><circle cx="486.4" cy="310.2" r="0.85"/><circle cx="488.2" cy="312.1" r="0.85"/><circle cx="490.0" cy="312.1" r="0.85"/><circle cx="491.8" cy="312.1" r="0.85"/><circle cx="493.6" cy="310.2" r="0.85"/><circle cx="495.4" cy="312.1" r="0.85"/><circle cx="497.2" cy="312.1" r="0.85"/><circle cx="499.0" cy="312.1" r="0.85"/><circle cx="500.8" cy="310.2" r="0.85"/><circle cx="502.6" cy="312.1" r="0.85"/><circle cx="504.4" cy="312.1" r="0.85"/><circle cx="506.2" cy="312.1" r="0.85"/><circle cx="508.0" cy="310.2" r="0.85"/><circle cx="509.8" cy="312.1" r="0.85"/><circle cx="511.6" cy="312.1" r="0.85"/><circle cx="513.4" cy="312.1" r="0.85"/><circle cx="515.2" cy="310.2" r="0.85"/><circle cx="517.0" cy="312.1" r="0.85"/><circle cx="518.8" cy="312.1" r="0.85"/><circle cx="520.6" cy="312.1" r="0.85"/><circle cx="522.4" cy="310.2" r="0.85"/><circle cx="524.2" cy="312.1" r="0.85"/><circle cx="526.0" cy="312.1" r="0.85"/><circle cx="527.8" cy="312.1" r="0.85"/><circle cx="529.6" cy="310.2" r="0.85"/><circle cx="531.4" cy="312.1" r="0.85"/><circle cx="533.2" cy="313.9" r="0.85"/><circle cx="535.0" cy="312.1" r="0.85"/><circle cx="536.8" cy="310.2" r="0.85"/><circle cx="538.6" cy="312.1" r="0.85"/><circle cx="540.4" cy="312.1" r="0.85"/><circle cx="542.2" cy="312.1" r="0.85"/><circle cx="544.0" cy="310.2" r="0.85"/><circle cx="545.8" cy="312.1" r="0.85"/><circle cx="547.6" cy="312.1" r="0.85"/><circle cx="549.4" cy="312.1" r="0.85"/><circle cx="551.2" cy="310.2" r="0.85"/><circle cx="553.0" cy="312.1" r="0.85"/><circle cx="554.8" cy="312.1" r="0.85"/><circle cx="556.6" cy="312.1" r="0.85"/><circle cx="558.4" cy="310.2" r="0.85"/><circle cx="560.2" cy="312.1" r="0.85"/><circle cx="562.0" cy="312.1" r="0.85"/></g>
</svg>
<div class="a" style="left:4.5px;top:355.6px;width:20px;text-align:center;font-size:6.2px;font-weight:bold;color:#222;-webkit-text-stroke:0.15px #222;transform:rotate(-90deg)">FPS</div>
<div class="a" style="left:570px;top:343px;width:20px;text-align:center;font-size:6.6px;font-weight:bold;color:#333;transform:rotate(90deg)">Jank</div>

<div style="position:absolute;left:46px;top:430.8px;width:507px;height:7px;background:#4aa6f4"></div>
<div style="position:absolute;left:35px;top:428.8px;width:11px;height:11px;background:#f4f4f4;border:1px solid #c4c4c4;border-radius:1.5px"></div>
<div style="position:absolute;left:38.6px;top:432px;width:4.4px;height:4px;background:repeating-linear-gradient(90deg,#666 0,#666 0.9px,#ddd 0.9px,#ddd 1.75px)"></div>
<div style="position:absolute;left:552.5px;top:429.3px;width:11px;height:11px;background:#f4f4f4;border:1px solid #c4c4c4;border-radius:1.5px"></div>
<div style="position:absolute;left:556.1px;top:432.5px;width:4.4px;height:4px;background:repeating-linear-gradient(90deg,#666 0,#666 0.9px,#ddd 0.9px,#ddd 1.75px)"></div>
<svg style="position:absolute;left:0;top:440px" width="600" height="10">
 <line x1="197" y1="7" x2="205.6" y2="7" stroke="#c02aa8" stroke-width="1.2"/><circle cx="201.3" cy="7" r="1.3" fill="#c02aa8"/>
 <line x1="231" y1="7" x2="240" y2="7" stroke="#f28c4e" stroke-width="1.2"/><circle cx="235.5" cy="7" r="1.3" fill="#f28c4e"/>
 <line x1="267" y1="7" x2="276" y2="7" stroke="#e0405a" stroke-width="1.2"/>
 <line x1="315" y1="7" x2="323" y2="7" stroke="#5b8ff0" stroke-width="1.2"/>
 <line x1="358" y1="7" x2="367" y2="7" stroke="#50c8e8" stroke-width="1.2"/>
</svg>
<div class="a" style="left:15.30px;top:249.04px;font-size:9.2px;color:#1a1a1a;font-weight:bold;transform:scaleX(0.805);transform-origin:0 0;-webkit-text-stroke:0.25px #1a1a1a;">FPS</div>
<div class="a" style="left:463.00px;top:248.51px;font-size:6.2px;color:#555;transform:scaleX(1.024);transform-origin:0 0;">FPS(&gt;=)</div>
<div class="a" style="left:498.00px;top:248.75px;font-size:6.6px;color:#333;transform:scaleX(1.090);transform-origin:0 0;">18</div>
<div class="a" style="left:526.00px;top:248.75px;font-size:6.6px;color:#333;transform:scaleX(1.090);transform-origin:0 0;">25</div>
<div class="a" style="left:549.14px;top:248.80px;font-size:6.6px;color:#3d6cf0;transform:scaleX(1.077);transform-origin:0 0;-webkit-text-stroke:0.1px #3d6cf0;">重置</div>
<div class="a" style="left:291.50px;top:270.67px;font-size:5.2px;color:#fff;transform:scaleX(1.081);transform-origin:0 0;-webkit-text-stroke:0.15px #fff;">label1</div>
<div class="a" style="left:210.00px;top:443.45px;font-size:6.6px;color:#555;transform:scaleX(0.857);transform-origin:0 0;">FPS</div>
<div class="a" style="left:244.00px;top:443.45px;font-size:6.6px;color:#555;transform:scaleX(0.932);transform-origin:0 0;">Jank</div>
<div class="a" style="left:281.00px;top:443.45px;font-size:6.6px;color:#555;transform:scaleX(0.979);transform-origin:0 0;">BigJank</div>
<div class="a" style="left:328.00px;top:443.45px;font-size:6.6px;color:#555;transform:scaleX(1.029);transform-origin:0 0;">Stutter</div>
<div class="a" style="left:372.00px;top:443.45px;font-size:6.6px;color:#555;transform:scaleX(0.992);transform-origin:0 0;">InterFrame</div>
<div style="position:absolute;left:595px;top:129px;width:5px;height:321px;background:linear-gradient(90deg,rgba(245,245,252,0),#f6f6fb 70%,#f1f1f8)"></div><div style="position:absolute;left:595px;top:96px;width:5px;height:25px;background:linear-gradient(90deg,rgba(245,245,252,0),#f6f6fb 70%,#f1f1f8)"></div>
</body></html>
